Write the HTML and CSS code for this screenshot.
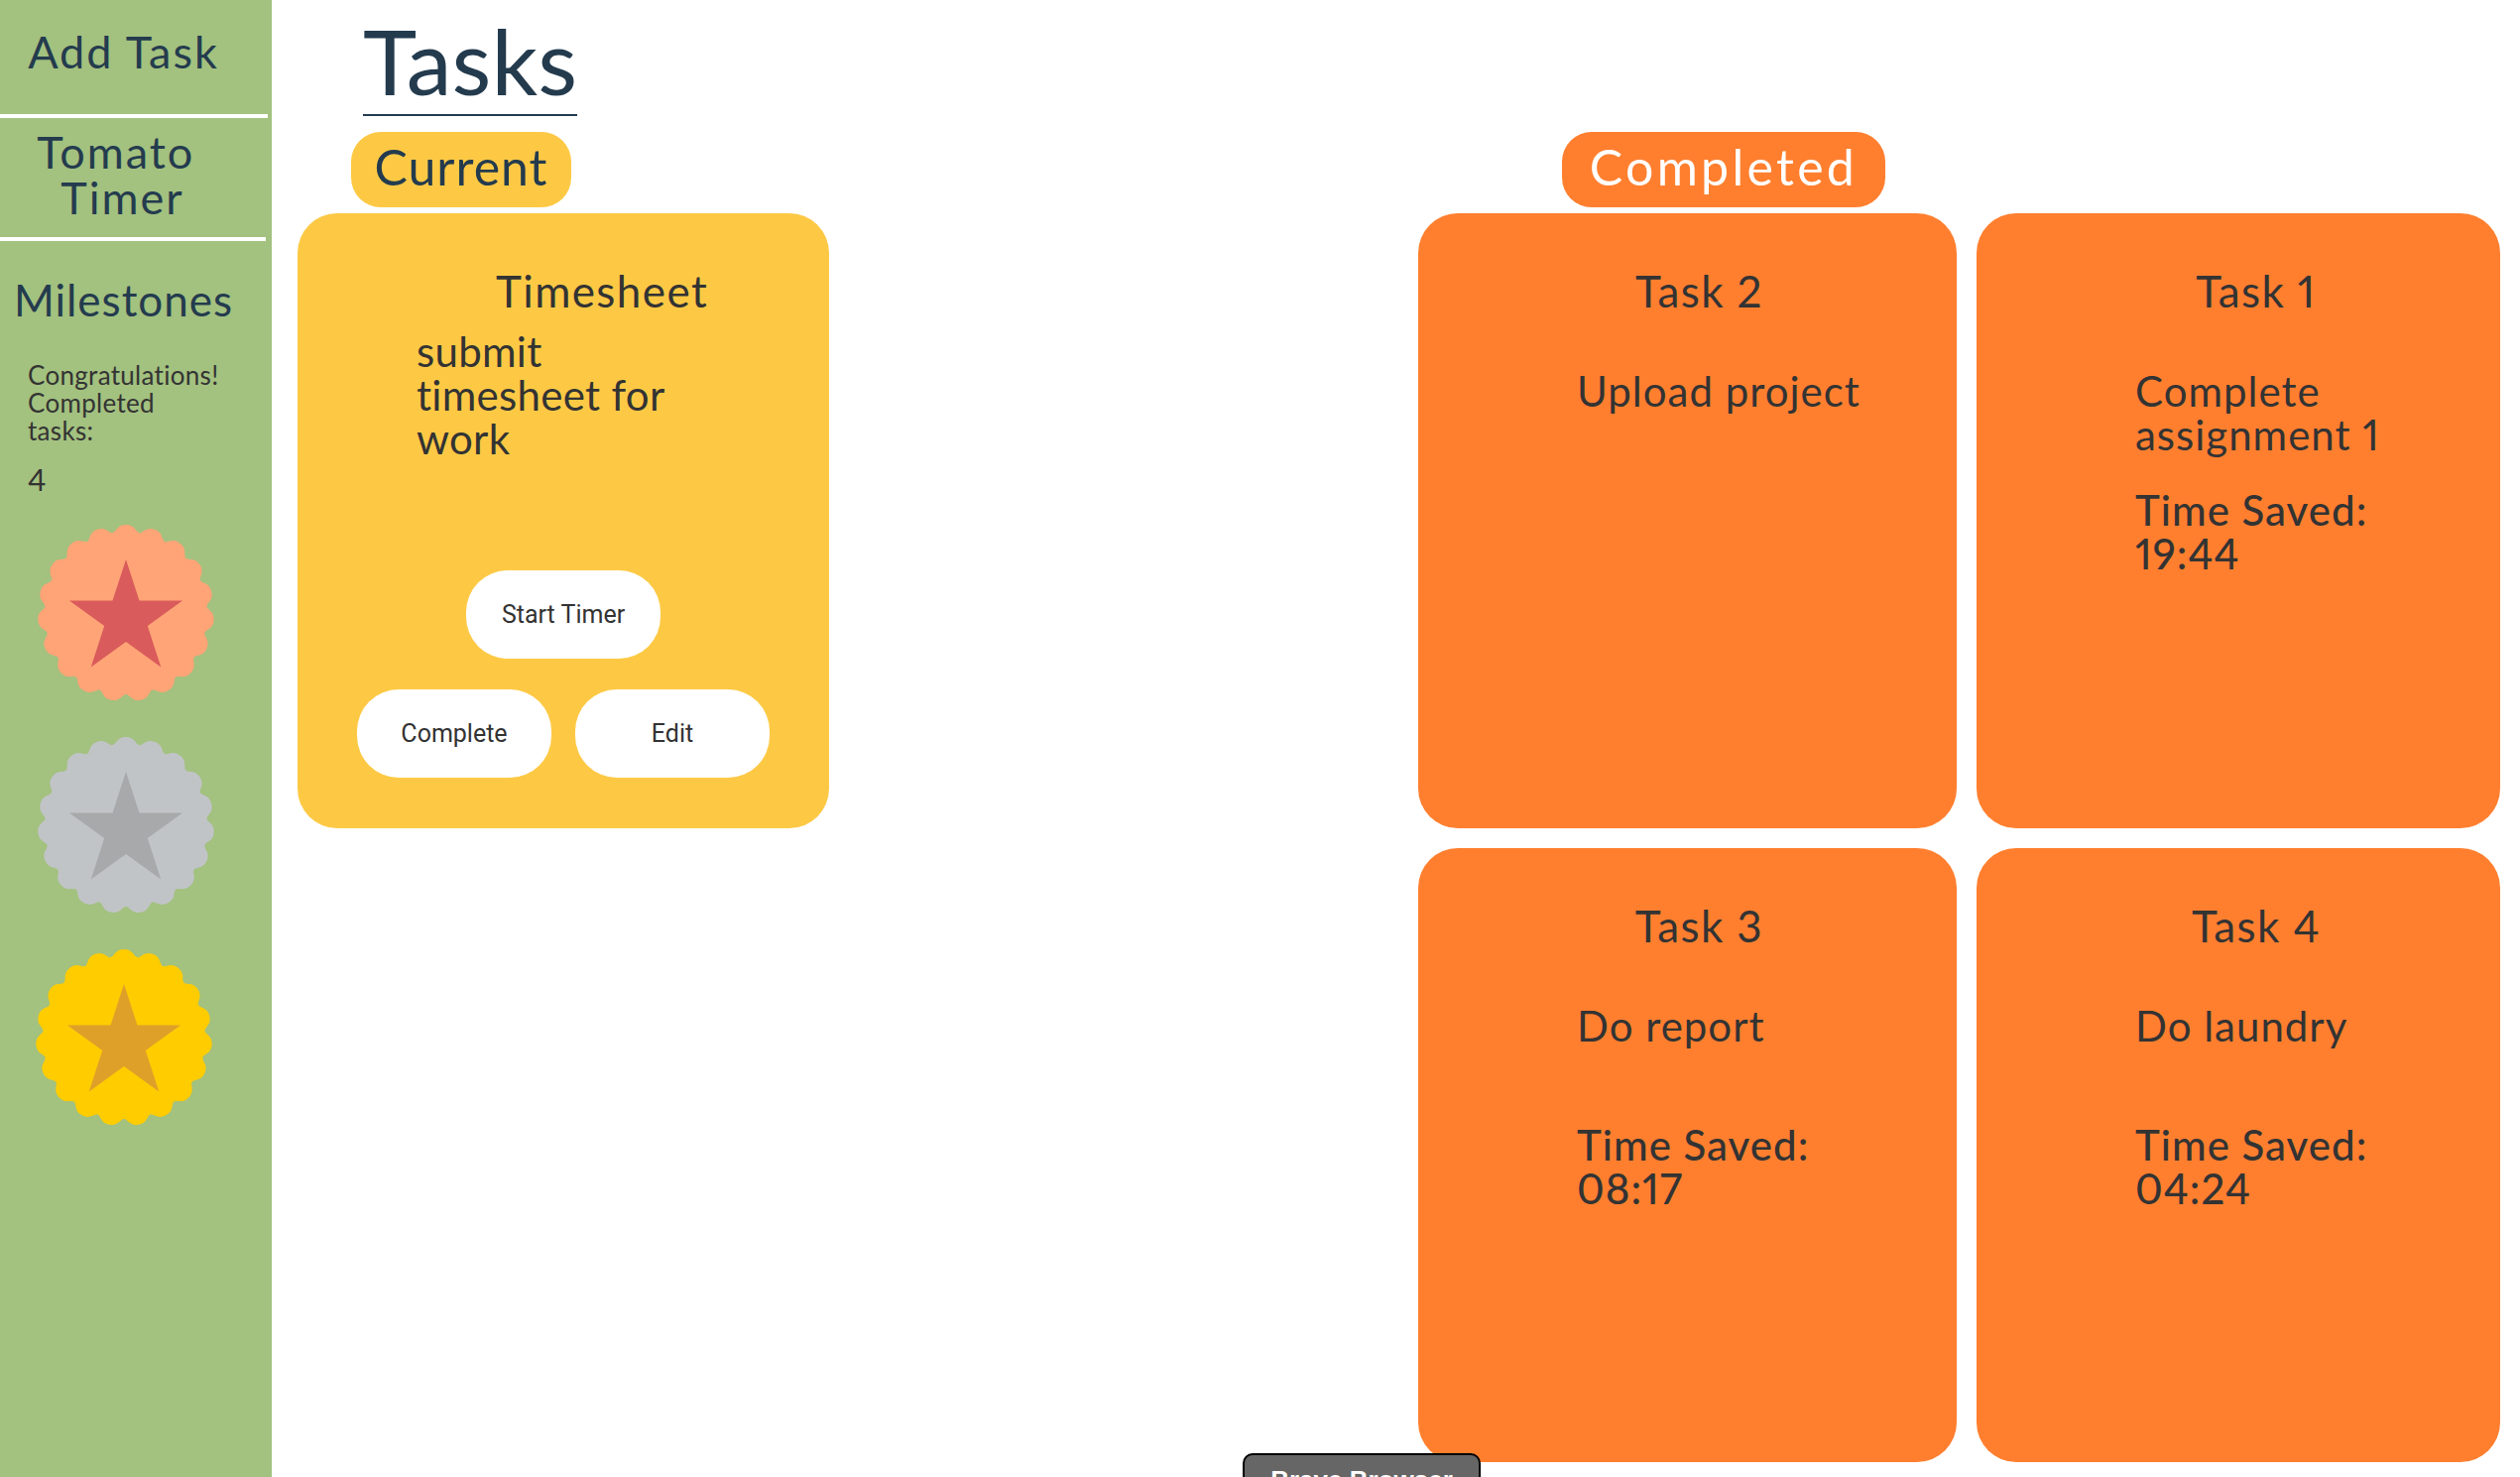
FILE: index.html
```html
<!DOCTYPE html>
<html lang="en">
<head>
  <meta charset="UTF-8">
  <title>Tasks</title>
  <link rel="stylesheet" href="styles.css">
</head>
<body>
  <svg class="defs" width="0" height="0">
    <defs>
      <g id="lobes">
        <circle r="82"/>
        <path id="lobe" d="M-13.5,-80.9 C-9.5,-81.6 -9.5,-89 0,-89 C9.5,-89 9.5,-81.6 13.5,-80.9 Z"/>
        <use href="#lobe" transform="rotate(18.95)"/>
        <use href="#lobe" transform="rotate(37.89)"/>
        <use href="#lobe" transform="rotate(56.84)"/>
        <use href="#lobe" transform="rotate(75.79)"/>
        <use href="#lobe" transform="rotate(94.74)"/>
        <use href="#lobe" transform="rotate(113.68)"/>
        <use href="#lobe" transform="rotate(132.63)"/>
        <use href="#lobe" transform="rotate(151.58)"/>
        <use href="#lobe" transform="rotate(170.53)"/>
        <use href="#lobe" transform="rotate(189.47)"/>
        <use href="#lobe" transform="rotate(208.42)"/>
        <use href="#lobe" transform="rotate(227.37)"/>
        <use href="#lobe" transform="rotate(246.32)"/>
        <use href="#lobe" transform="rotate(265.26)"/>
        <use href="#lobe" transform="rotate(284.21)"/>
        <use href="#lobe" transform="rotate(303.16)"/>
        <use href="#lobe" transform="rotate(322.11)"/>
        <use href="#lobe" transform="rotate(341.05)"/>
      </g>
      <polygon id="star" points="0,-54 13.47,-12.54 57.06,-12.54 21.79,13.08 35.27,54.54 0,28.92 -35.27,54.54 -21.79,13.08 -57.06,-12.54 -13.47,-12.54"/>
    </defs>
  </svg>

  <!-- Sidebar -->
  <aside class="sidebar">
    <a class="nav-item nav-add">Add Task</a>
    <a class="nav-item nav-timer">Tomato&nbsp;<br>Timer</a>
    <h2 class="milestones-title">Milestones</h2>
    <p class="milestones-text">Congratulations!<br>Completed<br>tasks:</p>
    <p class="milestones-count">4</p>
    <div class="badges">
      <svg class="badge badge-bronze" viewBox="-90 -90 180 180"><use class="badge-bg" href="#lobes"/><use class="badge-star" href="#star"/></svg>
      <svg class="badge badge-silver" viewBox="-90 -90 180 180"><use class="badge-bg" href="#lobes"/><use class="badge-star" href="#star"/></svg>
      <svg class="badge badge-gold" viewBox="-90 -90 180 180"><use class="badge-bg" href="#lobes"/><use class="badge-star" href="#star"/></svg>
    </div>
  </aside>

  <main class="main">
    <h1 class="page-title">Tasks</h1>
    <div class="board">
      <!-- Current -->
      <section class="col-current">
        <h2 class="pill pill-current">Current</h2>
        <div class="card card-current">
          <h3 class="card-title">Timesheet</h3>
          <p class="card-desc">submit<br>timesheet for<br>work</p>
          <div class="card-actions">
            <button class="btn">Start Timer</button>
            <div class="btn-row">
              <button class="btn">Complete</button>
              <button class="btn">Edit</button>
            </div>
          </div>
        </div>
      </section>

      <!-- Completed -->
      <section class="col-completed">
        <h2 class="pill pill-completed">Completed</h2>
        <div class="done-grid">
          <div class="card card-done">
            <h3 class="card-title">Task 2</h3>
            <p class="card-desc">Upload project</p>
          </div>
          <div class="card card-done">
            <h3 class="card-title">Task 1</h3>
            <p class="card-desc">Complete<br>assignment 1</p>
            <p class="card-saved">Time Saved:<br>19:44</p>
          </div>
          <div class="card card-done">
            <h3 class="card-title">Task 3</h3>
            <p class="card-desc">Do report</p>
            <p class="card-saved">Time Saved:<br>08:17</p>
          </div>
          <div class="card card-done">
            <h3 class="card-title">Task 4</h3>
            <p class="card-desc">Do laundry</p>
            <p class="card-saved">Time Saved:<br>04:24</p>
          </div>
        </div>
      </section>
    </div>
  </main>

  <div class="browser-tip">Brave Browser</div>
</body>
</html>
```

FILE: styles.css
```css
* {
  box-sizing: border-box;
}
html, body {
  height: 100%;
}
body {
  margin: 0;
  display: flex;
  overflow: hidden;
  background: #fff;
  color: #333;
  font-family: Lato, "Open Sans", sans-serif;
  font-variant-numeric: proportional-nums;
}
.defs {
  position: absolute;
}

/* Sidebar */
.sidebar {
  width: 274px;
  flex: none;
  background: #a3c17f;
  color: #243b4e;
  text-align: center;
}
.nav-item {
  display: block;
  width: 270px;
  padding-right: 21px;
  font-size: 45px;
  line-height: 46px;
  letter-spacing: 2px;
  border-bottom: 4px solid #fff;
}
.nav-add {
  height: 119px;
  padding-top: 29px;
}
.nav-timer {
  height: 124px;
  padding-top: 11px;
  width: 268px;
}
.milestones-title {
  width: 270px;
  margin: 34px 0 0;
  padding-right: 21px;
  font-size: 44px;
  font-weight: 400;
  line-height: 50px;
  letter-spacing: 1px;
}
.milestones-text {
  margin: 37px 0 0 28px;
  font-size: 26px;
  line-height: 28px;
  letter-spacing: 0.3px;
  text-align: left;
  color: #333;
}
.milestones-count {
  margin: 17px 0 0 28px;
  font-size: 31px;
  line-height: 36px;
  text-align: left;
  color: #333;
}
.badges {
  display: flex;
  flex-direction: column;
  gap: 34px;
  margin: 27px 0 0 37px;
}
.badge {
  display: block;
  width: 180px;
  height: 180px;
}
.badge-bronze .badge-bg { fill: #ffa477; }
.badge-bronze .badge-star { fill: #d95b5b; }
.badge-silver .badge-bg { fill: #c1c4c7; }
.badge-silver .badge-star { fill: #a7a9ab; }
.badge-gold { margin-left: -2px; }
.badge-gold .badge-bg { fill: #ffcc00; }
.badge-gold .badge-star { fill: #dfa02a; }

/* Main */
.main {
  flex: 1;
  padding-left: 26px;
}
.page-title {
  display: inline-block;
  margin: 0 0 0 66px;
  height: 117px;
  padding-top: 11px;
  border-bottom: 2px solid #243b4e;
  color: #243b4e;
  font-size: 92px;
  font-weight: 400;
  line-height: 100px;
}
.board {
  display: flex;
  margin-top: 16px;
}
.col-current {
  width: 536px;
  flex: none;
}
.col-completed {
  margin-left: 594px;
}
.pill {
  height: 76px;
  margin: 0 0 6px;
  border-radius: 30px;
  font-size: 50px;
  font-weight: 400;
  line-height: 70px;
  text-align: center;
  letter-spacing: 1px;
}
.pill-current {
  width: 222px;
  margin-left: 54px;
  background: #fdc945;
  color: #243b4e;
}
.pill-completed {
  width: 326px;
  margin-left: 145px;
  background: #ff7f2f;
  color: #fff;
  letter-spacing: 3.3px;
}

/* Cards */
.card {
  border-radius: 40px;
}
.card-title {
  margin: 0;
  font-size: 44px;
  font-weight: 400;
  line-height: 50px;
  text-align: center;
  letter-spacing: 1.4px;
}
.card-desc {
  margin: 0;
  font-size: 42px;
  line-height: 44px;
  letter-spacing: 1px;
}
.card-current {
  height: 620px;
  display: flex;
  flex-direction: column;
  padding-top: 53px;
  background: #fdc945;
}
.card-current .card-title {
  padding-left: 78px;
}
.card-current .card-desc {
  margin: 14px 0 0 120px;
  letter-spacing: 0.3px;
}
.card-actions {
  display: flex;
  flex-direction: column;
  align-items: center;
  gap: 31px;
  margin-top: 111px;
}
.btn-row {
  display: flex;
  gap: 24px;
}
.btn {
  width: 196px;
  height: 89px;
  border: none;
  border-radius: 42px;
  background: #fff;
  color: #333;
  font-family: Roboto, sans-serif;
  font-size: 25px;
}
.done-grid {
  display: grid;
  grid-template-columns: 543px 528px;
  grid-template-rows: 620px 619px;
  gap: 20px;
}
.card-done {
  padding: 53px 0 0 160px;
  background: #ff7f2f;
}
.card-done .card-title {
  margin-left: -136px;
}
.card-done:nth-child(even) .card-title {
  margin-left: -124px;
}
.card-done .card-desc {
  min-height: 88px;
  margin-top: 54px;
}
.card-saved {
  margin: 32px 0 0;
  font-size: 42px;
  font-weight: 500;
  line-height: 44px;
  letter-spacing: 1px;
}

/* Browser label clipped at the window edge */
.browser-tip {
  position: fixed;
  left: 1253px;
  top: 1465px;
  width: 240px;
  height: 50px;
  padding-top: 10px;
  border: 2px solid #000;
  border-radius: 10px 10px 0 0;
  background: #666;
  color: #fff;
  font-family: "Liberation Sans", sans-serif;
  font-size: 26px;
  font-weight: 700;
  line-height: 30px;
  text-align: center;
}
```
